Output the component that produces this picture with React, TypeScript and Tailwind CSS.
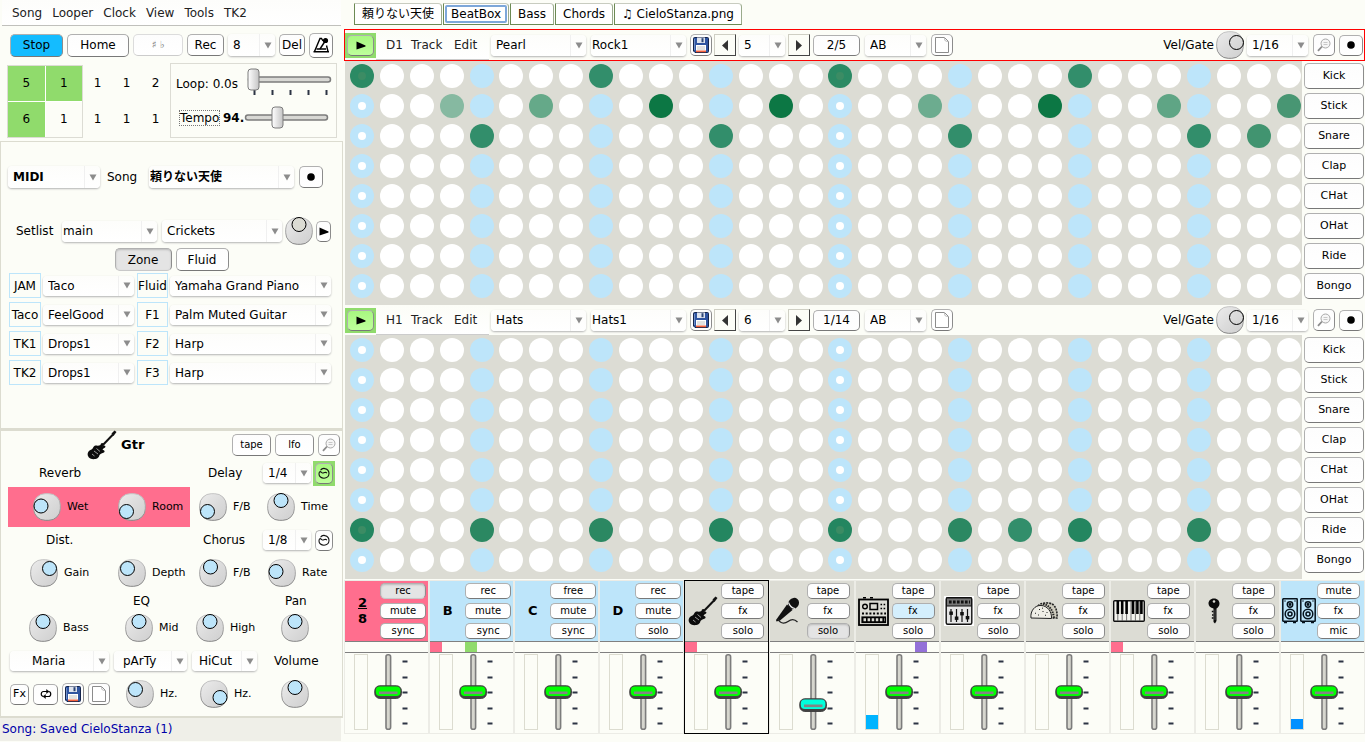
import React, { useState } from 'react';
import { clsx } from 'clsx';

/* ---------- shared controls ---------- */

type BtnProps = React.ButtonHTMLAttributes<HTMLButtonElement> & { tone?: 'white' | 'pressed' | 'blue' | 'lime' | 'sky' };

function Btn({ tone = 'white', className, children, ...rest }: BtnProps) {
  return (
    <button
      type="button"
      {...rest}
      className={clsx(
        'flex shrink-0 items-center justify-center rounded-[5px] border border-[#b0b0b0] border-b-[#787878] border-r-[#8c8c8c] whitespace-nowrap',
        tone === 'white' && 'bg-linear-to-b from-[#fdfdfd] to-white',
        tone === 'pressed' && 'border-[#a8a8a8] border-b-[#c8c8c8] bg-[#e4e4e4] shadow-[inset_0_1px_2px_#bbbbbb]',
        tone === 'blue' && 'bg-[#14bcff]',
        tone === 'lime' && 'bg-linear-to-b from-[#a8f880] to-[#beff9b]',
        tone === 'sky' && 'bg-[#d4effd]',
        className,
      )}
    >
      {children}
    </button>
  );
}

type ComboProps = { label: string; value: string; className?: string; pad?: string; id?: string };

function Combo({ label, value, className, pad = 'pl-[5px]', id }: ComboProps) {
  return (
    <div className={clsx('grid shrink-0 items-center rounded-[4px] bg-linear-to-b from-[#fdfdfb] to-white shadow-[0_1px_2px_#b4b4b4]', className)}>
      <select
        id={id}
        aria-label={label}
        defaultValue={value}
        className={clsx('col-start-1 row-start-1 h-full w-full min-w-0 appearance-none overflow-hidden bg-transparent pr-4', pad)}
      >
        <option>{value}</option>
      </select>
      <span className="pointer-events-none col-start-1 row-start-1 flex h-full w-4 items-center justify-center justify-self-end border-l border-[#f0f0f0]">
        <svg width="8" height="7" viewBox="0 0 8 7" aria-hidden="true">
          <path d="M0.5 0.5h7L4 6.5z" fill="#8c8c8c" />
        </svg>
      </span>
    </div>
  );
}

type KnobProps = { name: string; dx?: number; dy?: number; fill?: string };

function Knob({ name, dx = 0, dy = -6.5, fill = '#bde5fa' }: KnobProps) {
  return (
    <span className="grid h-7 w-7 shrink-0">
      <svg className="col-start-1 row-start-1" width="28" height="28" viewBox="0 0 28 28" aria-hidden="true">
        <defs>
          <linearGradient id="knobBody" x1="0" y1="0" x2="1" y2="1">
            <stop offset="0" stopColor="#ececec" />
            <stop offset="0.5" stopColor="#dcdcdc" />
            <stop offset="1" stopColor="#cfcfcf" />
          </linearGradient>
          <linearGradient id="knobEdge" x1="0" y1="0" x2="0" y2="1">
            <stop offset="0" stopColor="#c4c4c4" />
            <stop offset="1" stopColor="#868686" />
          </linearGradient>
        </defs>
        <rect x="0.7" y="0.7" width="26.6" height="26.6" rx="11.500" fill="url(#knobBody)" stroke="url(#knobEdge)" />
        <circle cx={14 + dx} cy={14 + dy} r="7" fill={fill} stroke="#000" />
      </svg>
      <input type="range" aria-label={name} className="col-start-1 row-start-1 h-7 w-7 opacity-0" />
    </span>
  );
}

function LabelKnob({ text, ...knob }: { text: string } & Omit<KnobProps, 'name'>) {
  return (
    <label className="flex items-center gap-1.5 text-[11px]">
      <Knob name={text} {...knob} />
      {text}
    </label>
  );
}

/* ---------- small icons ---------- */

const Floppy = () => (
  <svg width="16" height="16" viewBox="0 0 16 16" aria-hidden="true">
    <path d="M0.5 1.5q0-1 1-1h13q1 0 1 1v13q0 1-1 1H2l-1.500-1.500z" fill="#2f54a0" stroke="#15244a" />
    <path d="M1.500 2v11" stroke="#6f8fca" />
    <rect x="4" y="0.500" width="8" height="5.500" fill="#dfe4ee" />
    <rect x="8.500" y="1.200" width="2" height="4" fill="#2b4476" />
    <rect x="3" y="8" width="10" height="7" fill="#fff" />
    <path d="M4 10h8M4 12h8" stroke="#c4c4c4" />
    <rect x="3" y="13.500" width="10" height="1.700" fill="#f2603c" />
  </svg>
);

const Doc = () => (
  <svg width="14" height="16" viewBox="0 0 14 16" aria-hidden="true">
    <path d="M0.500 0.500h9l4 4v11h-13z" fill="#fff" stroke="#8c8c8c" />
    <path d="M9.500 0.500q0 3 1 3.500t3 0.500" fill="none" stroke="#b8b8b8" />
  </svg>
);

const Magnifier = () => (
  <svg width="14" height="14" viewBox="0 0 14 14" fill="none" aria-hidden="true">
    <circle cx="8.500" cy="5.500" r="4.500" fill="#f6f6f6" stroke="#a8a8a8" />
    <path d="M6.500 4.500h4M6.500 6.500h4" stroke="#c8c8c8" />
    <path d="M5 8.500L1 12.800" stroke="#8c8c8c" strokeWidth="1.800" />
  </svg>
);

const Dot = () => (
  <svg width="8" height="8" viewBox="0 0 8 8" aria-hidden="true"><circle cx="4" cy="4" r="3.800" /></svg>
);

const PlayTri = () => (
  <svg width="10" height="9" viewBox="0 0 10 9" aria-hidden="true"><path d="M0.500 0.500L9.500 4.500v1L0.500 8.500z" /></svg>
);

const Swirl = () => (
  <svg width="12" height="12" viewBox="0 0 12 12" fill="none" stroke="#111" strokeWidth="1.100" aria-hidden="true">
    <path d="M2.500 3.200C3.500 1.800 5.500 1.200 7 1.600c2.500 .6 4 2.600 4 5 0 2.600-2.200 4.600-5 4.600S1 9.400 1 7c0-1 .3-1.800 .8-2.300" />
    <path d="M1.800 4.700c1.200-.4 1.700 1 2.700 1.300s1.500-.8 3-.8l1.500 .8" />
  </svg>
);

const Repeat = () => (
  <svg width="12" height="10" viewBox="0 0 12 10" fill="none" stroke="#000" strokeWidth="1.200" aria-hidden="true">
    <path d="M3.500 7.500C0.500 7.500 0.500 2.500 3.500 2.500H8M8.500 2.500c3 0 3 5 0 5H4" />
    <path d="M6.500 0.500l2.500 2-2.500 2zM5.500 5.500L3 7.500l2.500 2z" fill="#000" strokeWidth="0.400" />
  </svg>
);

const Metronome = () => (
  <svg width="18" height="18" viewBox="0 0 18 18" fill="none" stroke="#000" strokeWidth="1.400" aria-hidden="true">
    <path d="M11 5L9.500 2.500H8L2.500 15.500M14.500 9.500L16 15.500" />
    <path d="M8 13l5.500-8.500" />
    <circle cx="13.500" cy="4.500" r="1.900" fill="#000" />
    <path d="M4.500 13H14M1.500 15.800h15.500" strokeWidth="1.600" />
  </svg>
);

/* ---------- instrument drawings ---------- */

const Guitar = () => (
  <svg width="30" height="30" viewBox="0 0 30 30" aria-hidden="true">
    <path d="M13 18L26 4.500" stroke="#111" strokeWidth="2" />
    <path d="M24.500 3.500L27.500 0.500l2 1.500-3 4z" fill="#111" />
    <path d="M16.500 13.500c-2-1.500-3 .5-3 1.500-2 1-3.500 .5-5 .5-2.500 .5-2 3-4 4-3 1-4.500 3.500-3.500 6.500 1 3 5 3.500 7.500 3 2.500-.5 3.500-2 4-4 1-2 4-1.500 5-3 .5-1.500-1-2-2-2 .5-2 3-2 3-3.500-1-1.500-2-1-4 .5z" fill="#0c0c0c" />
    <path d="M7 21l4 3M9.500 18.500l3.500 3M5 24l2.500 2" stroke="#aaa" strokeWidth="0.900" />
  </svg>
);

const Mic = () => (
  <svg width="26" height="28" viewBox="0 0 26 28" aria-hidden="true">
    <ellipse cx="18.500" cy="6.500" rx="5.200" ry="6" transform="rotate(40 18.500 6.500)" fill="#111" />
    <path d="M13.500 5.500c1 3 3.500 5.500 6.500 6" stroke="#eee" strokeWidth="1.200" fill="none" />
    <path d="M12 7.500l5.500 5.500L5 23.500l-3.500 1-.5-1.500z" fill="#111" />
    <path d="M3 22c3 6 8 4 10 2.500 4-3 7-2 9.500 .5" stroke="#222" strokeWidth="1.300" fill="none" />
  </svg>
);

const Synth = () => (
  <svg width="31" height="29" viewBox="0 0 31 29" fill="none" stroke="#000" aria-hidden="true">
    <path d="M5 .8h3M12 .8h3" strokeWidth="1.500" />
    <rect x="1" y="2.500" width="29" height="25.500" strokeWidth="1.800" />
    <circle cx="7" cy="9.500" r="2.300" strokeWidth="1.400" />
    <rect x="12" y="6.500" width="7.500" height="6" strokeWidth="1.500" />
    <path d="M22.500 7.500h6M22.500 11.500h6" strokeWidth="1.600" strokeDasharray="1.600 1.500" />
    <path d="M4 16.500h24" strokeWidth="2" strokeDasharray="2 1.700" />
    <rect x="4" y="20" width="23.500" height="5.500" strokeWidth="1.200" fill="#000" />
    <path d="M5.500 22.700h21" stroke="#dcdcd4" strokeWidth="3" strokeDasharray="2.500 1.600" />
  </svg>
);

const MixerDesk = () => (
  <svg width="30" height="30" viewBox="0 0 30 30" fill="none" stroke="#111" aria-hidden="true">
    <rect width="30" height="30" fill="#fff" stroke="none" />
    <rect x="2.200" y="1.800" width="25.600" height="26.500" rx="1.500" fill="#e6e6e6" strokeWidth="1.400" />
    <rect x="2.500" y="2" width="25" height="8" fill="#777" />
    <path d="M5 6h21" strokeWidth="3.200" strokeDasharray="2.600 1.400" />
    <path d="M7 13v13M12.500 13v13M18 13v13M23.500 13v13" strokeWidth="1.200" />
    <g fill="#111" stroke="none">
      <rect x="5.300" y="15.500" width="3.600" height="3.400" /><rect x="10.800" y="20.500" width="3.600" height="3.400" />
      <rect x="16.200" y="16" width="3.600" height="3.400" /><rect x="21.700" y="20" width="3.600" height="3.400" />
    </g>
  </svg>
);

const Taco = () => (
  <svg width="28" height="18" viewBox="0 0 28 18" stroke="#222" aria-hidden="true">
    <path d="M8 4C11 0 19 .5 22 2c4 2 5.500 8 5 14h-5" fill="#cfcdbf" strokeDasharray="2 1" strokeWidth="1.600" />
    <path d="M13 2c6 1 10 6 11 14" fill="none" strokeWidth="2" strokeDasharray="1.500 1" />
    <path d="M1 16C0 9 5 3 11 3.500c6 0 11 6 10.500 13z" fill="#efeee6" />
    <path d="M5 11l1 .5M9 7l1 1M13 9v1M8 13h1M15 13l1 .5M12 6l1 .3M17 10v1" />
  </svg>
);

const Piano = () => (
  <svg width="32" height="22" viewBox="0 0 32 22" aria-hidden="true">
    <rect x="0.700" y="0.700" width="30.600" height="20.600" rx="1" fill="#f4f4ee" stroke="#111" strokeWidth="1.400" />
    <path d="M4.800 1v20M9.200 1v20M13.600 1v20M18 1v20M22.400 1v20M26.800 1v20" stroke="#555" strokeWidth="0.800" />
    <path d="M4.800 1v13M9.200 1v13M13.600 1v13M20 1v13M24.400 1v13M28.400 1v13" stroke="#000" strokeWidth="2.600" />
  </svg>
);

const KeyIcon = () => (
  <svg width="12" height="26" viewBox="0 0 12 26" aria-hidden="true">
    <path d="M6 .5C9.500 .5 11.500 3 11.500 5.500S10 9.500 8.500 10.500V23L7 25.500 5.500 24V10.500C2.500 10 .5 8 .5 5.500S2.500 .5 6 .5z" fill="#0a0a0a" />
    <path d="M5.500 13.500H3.800M5.500 17H4M5.500 20H3.800" stroke="#0a0a0a" strokeWidth="1.500" />
    <circle cx="6" cy="3.500" r="1.300" fill="#dcdcd4" />
    <path d="M7 11.500V22" stroke="#999" strokeWidth="0.500" />
  </svg>
);

const Speakers = () => (
  <svg width="34" height="26" viewBox="0 0 34 26" fill="none" stroke="#06121c" strokeWidth="1.500" aria-hidden="true">
    {[0, 18].map((x) => (
      <g key={x} transform={`translate(${x} 0)`}>
        <rect x="0.800" y="0.800" width="14.400" height="22.400" rx="0.500" />
        <circle cx="8" cy="6.500" r="2.700" />
        <circle cx="8" cy="6.500" r="0.700" />
        <circle cx="8" cy="16" r="4.800" />
        <circle cx="8" cy="16" r="2" />
        <path d="M2.500 3h1M12.500 3h1M2 24.500h3M11 24.500h3" />
      </g>
    ))}
  </svg>
);

/* ---------- left column ---------- */

function HSlider({ name, at, ticks }: { name: string; at: number; ticks?: boolean }) {
  const h = ticks ? 32 : 24;
  return (
    <span className="grid w-[86px]">
      <svg className="col-start-1 row-start-1" width="86" height={h} viewBox={`0 0 86 ${h}`} aria-hidden="true">
        <defs>
          <linearGradient id="thumbH" x1="0" y1="0" x2="1" y2="0">
            <stop offset="0" stopColor="#fff" />
            <stop offset="1" stopColor="#c4c4c4" />
          </linearGradient>
        </defs>
        <rect x="1.500" y="9" width="82" height="5" rx="2.500" fill="#d8d8d4" stroke="#7c7c7c" strokeWidth="1.500" />
        {ticks && <path d="M7.500 22v5M25.500 22v5M43.500 22v5M61.500 22v5M79.500 22v5" stroke="#2c3444" strokeWidth="2" />}
        <rect x={at - 5} y="1" width="11" height="21" rx="3" fill="url(#thumbH)" stroke="#7c7c7c" />
      </svg>
      <input type="range" aria-label={name} className="col-start-1 row-start-1 w-full opacity-0" />
    </span>
  );
}

function Transport() {
  return (
    <div className="px-2 pt-1.5">
      <div className="flex h-[26px] items-center gap-1 pl-0.5">
        <Btn tone="blue" className="h-[23px] w-[53px]">Stop</Btn>
        <Btn className="h-[23px] w-[62px]">Home</Btn>
        <Btn className="h-[22px] w-[50px] border-[#dcdcdc] border-r-[#dcdcdc] border-b-[#cccccc] text-[10px] text-[#777]" disabled>♯ ♭</Btn>
        <Btn className="h-[22px] w-[37px]">Rec</Btn>
        <Combo label="Loop length" value="8" className="h-[22px] w-[47px]" />
        <Btn className="h-[22px] w-[26px]">Del</Btn>
        <Btn className="h-[25px] w-6" aria-label="Metronome"><Metronome /></Btn>
      </div>
      <div className="flex items-start pt-[5px]">
        <div className="mt-0.5 -ml-px grid w-[76px] shrink-0 grid-cols-2 gap-px border border-[#dcdcd4] bg-white text-center leading-[35px]">
          <span className="bg-[#90db6c]">5</span>
          <span className="bg-[#90db6c]">1</span>
          <span className="bg-[#90db6c]">6</span>
          <span className="bg-[#fcfdf7]">1</span>
        </div>
        <div className="mt-0.5 grid w-[87px] shrink-0 grid-cols-3 text-center leading-9">
          {['1', '1', '2', '1', '1', '1'].map((n, i) => <span key={i}>{n}</span>)}
        </div>
        <div className="w-[167px] shrink-0 border border-[#dcdcd4] pl-[5px]">
          <div className="flex h-10 items-center">
            <span className="w-[71px]">Loop: 0.0s</span>
            <HSlider name="Loop" at={6} ticks />
          </div>
          <div className="flex h-[33px] items-start">
            <span className="ml-[3px] mt-1.5 w-[41px] border border-dotted border-[#777] leading-[14px]">Tempo</span>
            <b className="mt-1.5 w-[24px] pl-[3px]">94.</b>
            <div className="mt-0.5"><HSlider name="Tempo" at={33} /></div>
          </div>
        </div>
      </div>
    </div>
  );
}

const zones: [string, string, string, string][] = [
  ['JAM', 'Taco', 'Fluid', 'Yamaha Grand Piano'],
  ['Taco', 'FeelGood', 'F1', 'Palm Muted Guitar'],
  ['TK1', 'Drops1', 'F2', 'Harp'],
  ['TK2', 'Drops1', 'F3', 'Harp'],
];

function SongPanel() {
  return (
    <section className="h-[288px] border border-[#dcdcd0] px-[7px] pt-[23px]">
      <div className="flex h-6 items-center">
        <Combo label="Device" value="MIDI" className="h-[22px] w-[92px] font-bold" />
        <label htmlFor="song" className="w-[49px] pl-[7px]">Song</label>
        <Combo id="song" label="Song" value="頼りない天使" className="h-[22px] w-[145px] font-bold" pad="pl-px" />
        <Btn className="ml-[5px] h-[22px] w-6" aria-label="Record song"><Dot /></Btn>
      </div>
      <div className="mt-7 flex h-7 items-center pl-2">
        <label htmlFor="setlist" className="w-[46px]">Setlist</label>
        <Combo id="setlist" label="Setlist" value="main" className="h-[21px] w-[95px]" pad="pl-px" />
        <Combo label="Backing sound" value="Crickets" className="ml-[5px] h-[22px] w-[120px]" />
        <span className="ml-[3px]"><Knob name="Backing level" fill="#dcdcd4" /></span>
        <Btn className="ml-[3px] h-[21px] w-[15px]" aria-label="Play setlist"><PlayTri /></Btn>
      </div>
      <div className="mt-[3px] flex justify-center gap-1">
        <Btn tone="pressed" className="h-[23px] w-[57px]">Zone</Btn>
        <Btn className="h-[23px] w-[53px]">Fluid</Btn>
      </div>
      <div className="mt-0.5 flex flex-col gap-1 pl-px">
        {zones.map(([a, av, b, bv]) => (
          <div key={a} className="flex h-[25px] items-center">
            <span className="flex h-full w-8 items-center justify-center border border-[#bde5fa]">{a}</span>
            <Combo label={a} value={av} className="ml-0.5 h-5 w-[91px]" />
            <span className="ml-[3px] flex h-full w-[31px] items-center justify-center border border-[#bde5fa]">{b}</span>
            <Combo label={b} value={bv} className="ml-0.5 h-5 w-[161px]" />
          </div>
        ))}
      </div>
    </section>
  );
}

function FxPanel() {
  return (
    <section className="h-[289px] border border-t-2 border-b-2 border-[#dcdcd0]">
      <div className="flex h-7 items-center pr-0.5">
        <span className="ml-[86px]"><Guitar /></span>
        <h2 className="ml-1 flex-1 text-[13px] font-bold">Gtr</h2>
        <div className="flex gap-1 text-[10px]">
          <Btn className="h-[22px] w-[39px]">tape</Btn>
          <Btn className="h-[22px] w-[39px]">lfo</Btn>
          <Btn className="h-[22px] w-[22px]" aria-label="Inspect"><Magnifier /></Btn>
        </div>
      </div>
      <div className="flex h-7 items-center">
        <span className="w-[169px] pl-[38px]">Reverb</span>
        <label htmlFor="delay" className="w-[93px] pl-[38px]">Delay</label>
        <Combo id="delay" label="Delay" value="1/4" className="h-5 w-12" />
        <span className="ml-0.5 flex h-[25px] w-[22px] items-center justify-center bg-[#90db6c]">
          <Btn tone="lime" className="h-[21px] w-[18px]" aria-label="Sync delay"><Swirl /></Btn>
        </span>
      </div>
      <div className="flex h-10 items-center">
        <div className="ml-[7px] flex h-full w-[182px] items-center bg-[#ff6e8e]">
          <div className="w-[86px] pl-[25px]"><LabelKnob text="Wet" dx={-6} dy={-1} /></div>
          <div className="pl-6"><LabelKnob text="Room" dx={-5.500} dy={4.500} /></div>
        </div>
        <div className="w-[77px] pl-[9px]"><LabelKnob text="F/B" dx={-5.500} dy={4.500} /></div>
        <LabelKnob text="Time" />
      </div>
      <div className="flex h-[26px] items-center">
        <span className="w-[164px] pl-[45px]">Dist.</span>
        <label htmlFor="chorus" className="w-[98px] pl-[38px]">Chorus</label>
        <Combo id="chorus" label="Chorus" value="1/8" className="h-5 w-12" />
        <Btn className="ml-1 h-[21px] w-[18px]" aria-label="Sync chorus"><Swirl /></Btn>
      </div>
      <div className="grid h-10 grid-cols-[88px_81px_69px_1fr] items-center pl-[29px]">
        <LabelKnob text="Gain" dx={5.500} dy={-4.500} />
        <LabelKnob text="Depth" dx={-4.500} dy={-4.500} />
        <LabelKnob text="F/B" dx={-2.500} dy={-6} />
        <LabelKnob text="Rate" dx={-6} dy={-1.500} />
      </div>
      <div className="flex h-4 items-center">
        <span className="w-[152px] pl-[132px]">EQ</span>
        <span className="pl-[132px]">Pan</span>
      </div>
      <div className="grid h-[38px] grid-cols-[96px_71px_85px_1fr] items-center pl-7">
        <LabelKnob text="Bass" />
        <LabelKnob text="Mid" />
        <LabelKnob text="High" />
        <Knob name="Pan" />
      </div>
      <div className="flex h-7 items-center gap-[5px] pl-[9px]">
        <Combo label="Preset" value="Maria" className="h-5 w-[99px]" pad="pl-[22px]" />
        <Combo label="Filter mode" value="pArTy" className="h-5 w-[73px]" pad="pl-[9px]" />
        <Combo label="Filter type" value="HiCut" className="h-5 w-[65px]" pad="pl-[7px]" />
        <span className="pl-3">Volume</span>
      </div>
      <div className="flex h-[38px] items-center pl-[9px]">
        <Btn className="h-[21px] w-[19px] text-[11px]">Fx</Btn>
        <Btn className="ml-1 h-[21px] w-[25px]" aria-label="Repeat"><Repeat /></Btn>
        <Btn className="ml-1 h-[22px] w-[22px]" aria-label="Save preset"><Floppy /></Btn>
        <Btn className="ml-1 h-[22px] w-[22px]" aria-label="New preset"><Doc /></Btn>
        <div className="ml-4 w-[74px]"><LabelKnob text="Hz." dx={-4.500} dy={-4.500} /></div>
        <div className="w-[81px]"><LabelKnob text="Hz." dx={6} dy={3.500} /></div>
        <Knob name="Volume" />
      </div>
    </section>
  );
}

/* ---------- beat boxes ---------- */

const drums = ['Kick', 'Stick', 'Snare', 'Clap', 'CHat', 'OHat', 'Ride', 'Bongo'];
type Hits = Record<string, Record<number, string>>;

const rockHits: Hits = {
  Kick: { 0: '#2b8a64', 8: '#328e6b', 16: '#2b8a64', 24: '#328e6b' },
  Stick: { 3: '#86b9a1', 6: '#65a989', 10: '#0c7744', 14: '#0c7744', 19: '#6cac8f', 23: '#0c7744', 27: '#5fa585', 31: '#489673' },
  Snare: { 4: '#328e6b', 12: '#328e6b', 20: '#328e6b', 28: '#328e6b', 30: '#419470' },
};
const hatHits: Hits = {
  Ride: { 0: '#248660', 4: '#2b8862', 8: '#2b8862', 12: '#248660', 16: '#248660', 20: '#2b8862', 22: '#328e6b', 24: '#248660', 28: '#2b8862' },
};

function Steps({ hits }: { hits: Hits }) {
  return (
    <div className="flex">
      <div className="ml-px min-w-0 flex-1 bg-[#dcdcd4] pb-1 pl-0.5">
        {drums.map((drum) => (
          <div key={drum} className="-mr-0.5 grid h-[30px] grid-cols-[repeat(32,minmax(0,1fr))] items-center justify-items-center">
            {Array.from({ length: 32 }, (_, i) => {
              const hit = hits[drum]?.[i];
              return (
                <button
                  key={i}
                  type="button"
                  aria-label={`${drum} step ${i + 1}`}
                  style={hit ? { backgroundColor: hit } : undefined}
                  className={clsx('flex size-6 items-center justify-center rounded-full', i % 4 === 0 ? 'bg-[#bde5fa]' : 'bg-white')}
                >
                  {i % 16 === 0 && <span className={clsx('size-2 rounded-full', hit ? 'bg-[#3c8c64]' : 'bg-white')} />}
                </button>
              );
            })}
          </div>
        ))}
      </div>
      <div className="w-[63px] pr-px pl-0.5 text-[11px]">
        {drums.map((drum) => (
          <div key={drum} className="flex h-[30px] items-center">
            <Btn className="h-[26px] w-full">{drum}</Btn>
          </div>
        ))}
      </div>
    </div>
  );
}

type BarProps = { code: string; kit: string; pattern: string; page: string; count: string; active?: boolean };

function TrackBar({ code, kit, pattern, page, count, active }: BarProps) {
  return (
    <div className={clsx('flex items-center border-x', active ? 'h-8 border-y border-[#ff0000]' : 'h-[30px] border-transparent')}>
      <span className="flex h-[25px] w-[31px] items-center justify-center bg-[#90db6c]">
        <Btn tone="lime" className="h-[21px] w-[27px]" aria-label={`Play ${code}`}><PlayTri /></Btn>
      </span>
      <nav className="flex h-full w-[113px] items-center border-b border-[#cccccc] bg-linear-to-b from-[#fcfdf7] to-white pl-2.5 text-[#222]">
        <button type="button" className="w-[25px] text-left">{code}</button>
        <button type="button" className="w-[43px] text-left">Track</button>
        <button type="button">Edit</button>
      </nav>
      <Combo label="Kit" value={kit} className="ml-0.5 h-[21px] w-[95px]" />
      <Combo label="Pattern" value={pattern} className="ml-[5px] h-[21px] w-[95px]" pad="pl-px" />
      <Btn className="ml-1 h-[22px] w-[22px]" aria-label="Save pattern"><Floppy /></Btn>
      <button type="button" aria-label="Previous page" className="ml-0.5 flex h-[22px] w-[22px] items-center justify-center border border-[#cfcfc4] border-r-[#444] border-b-[#444]">
        <svg width="6" height="11" viewBox="0 0 6 11" aria-hidden="true"><path d="M6 0v11L0 5.500z" fill="#333" /></svg>
      </button>
      <Combo label="Page" value={page} className="ml-[3px] h-[21px] w-[46px]" />
      <button type="button" aria-label="Next page" className="ml-[3px] flex h-[22px] w-[22px] items-center justify-center border border-[#cfcfc4] border-r-[#444] border-b-[#444]">
        <svg width="6" height="11" viewBox="0 0 6 11" aria-hidden="true"><path d="M0 0v11l6-5.500z" fill="#333" /></svg>
      </button>
      <Btn className="ml-[3px] h-[21px] w-[47px]">{count}</Btn>
      <Combo label="Cycle" value="AB" className="ml-[5px] h-[21px] w-[61px]" />
      <Btn className="ml-[5px] h-[22px] w-[22px]" aria-label="New pattern"><Doc /></Btn>
      <div className="ml-auto flex items-center pr-px">
        <span className="mr-0.5">Vel/Gate</span>
        <Knob name="Velocity and gate" dx={6.500} dy={-2.500} fill="transparent" />
        <Combo label="Resolution" value="1/16" className="ml-[3px] h-[21px] w-[61px]" />
        <Btn className="ml-[5px] h-[22px] w-[22px]" aria-label="Inspect track"><Magnifier /></Btn>
        <Btn className="ml-1 h-[21px] w-6" aria-label="Record track"><Dot /></Btn>
      </div>
    </div>
  );
}

const tabs = ['頼りない天使', 'BeatBox', 'Bass', 'Chords', '♫ CieloStanza.png'];

function Tabs() {
  const [current, setCurrent] = useState('BeatBox');
  return (
    <div role="tablist" className="flex h-[29px] items-start gap-px pt-[3px] pl-2.5">
      {tabs.map((t) => (
        <button
          key={t}
          type="button"
          role="tab"
          aria-selected={t === current}
          onClick={() => setCurrent(t)}
          className="h-[22px] rounded-tr-[4px] border border-[#c8ccc0] border-r-[#9aab8c] border-b-[#6c8a54] border-l-[#6c8a54] bg-white p-px"
        >
          <span className={clsx('flex h-full items-center whitespace-nowrap px-1', t === current ? 'rounded-[2px] border-2 border-[#7da7d9]' : 'border-x-2 border-transparent')}>{t}</span>
        </button>
      ))}
    </div>
  );
}

/* ---------- mixer ---------- */

type Channel = {
  name: string;
  head: string;
  art: React.ReactNode;
  keys: string[];
  tones?: Record<number, 'pressed' | 'sky'>;
  marks?: string[];
  level?: string;
  low?: boolean;
  selected?: boolean;
  wide?: boolean;
};

const source = 'bg-[#dcdcd4]';
const sky = 'bg-[#bde5fa]';
const tfs = ['tape', 'fx', 'solo'];

const channels: Channel[] = [
  { name: 'A', head: 'bg-[#ff6e8e]', wide: true, keys: ['rec', 'mute', 'sync'], tones: { 0: 'pressed' }, art: <span className="flex flex-col items-center leading-4"><span className="underline">2</span><span>8</span></span> },
  { name: 'B', head: sky, wide: true, keys: ['rec', 'mute', 'sync'], art: 'B', marks: ['bg-[#ff6e8e]', 'ml-[23px] bg-[#90db6c]'] },
  { name: 'C', head: sky, wide: true, keys: ['free', 'mute', 'sync'], art: 'C' },
  { name: 'D', head: sky, wide: true, keys: ['rec', 'mute', 'solo'], art: 'D' },
  { name: 'Guitar', head: source, keys: tfs, art: <Guitar />, marks: ['bg-[#ff6e8e]'], selected: true },
  { name: 'Mic', head: source, keys: tfs, tones: { 2: 'pressed' }, art: <Mic />, low: true },
  { name: 'Synth', head: source, keys: tfs, tones: { 1: 'sky' }, art: <Synth />, marks: ['ml-[59px] bg-[#9370d8]'], level: 'h-[14px] bg-[#00b4ff]' },
  { name: 'Drums', head: source, keys: tfs, art: <MixerDesk /> },
  { name: 'Taco', head: source, keys: tfs, art: <Taco /> },
  { name: 'Piano', head: source, keys: tfs, art: <Piano />, marks: ['bg-[#ff6e8e]'] },
  { name: 'Key', head: source, keys: tfs, art: <KeyIcon /> },
  { name: 'Main', head: sky, keys: ['mute', 'fx', 'mic'], art: <Speakers />, level: 'h-[10px] bg-[#0090ff]' },
];

function Fader({ name, low }: { name: string; low?: boolean }) {
  const y = low ? 51 : 38;
  return (
    <span className="grid h-[76px] w-9 grid-cols-[36px] grid-rows-[76px]">
      <svg className="col-start-1 row-start-1" width="36" height="76" viewBox="0 0 36 76" aria-hidden="true">
        <rect x="12" y="0.800" width="4.600" height="74.400" rx="2" fill="#d6d6ce" stroke="#7c7c7c" strokeWidth="1.600" />
        <path d="M28.500 7.500h5M28.500 23.500h5M28.500 38.500h5M28.500 54.500h5M28.500 69.500h5" stroke="#2c3444" strokeWidth="2" />
        <rect x="0.800" y={y - 6.200} width="26.600" height="12.600" rx="5" fill="#444" stroke="#3c3c3c" />
        <rect x="1.800" y={y - 5.400} width="24.600" height="9.400" rx="4" fill={low ? '#00ffdc' : '#00ff00'} />
        <rect x="5" y={y - 0.500} width="18.500" height="2.600" fill="#848484" />
      </svg>
      <input type="range" aria-label={`${name} volume`} className="col-start-1 row-start-1 h-[76px] w-9 opacity-0 [writing-mode:vertical-lr]" />
    </span>
  );
}

function Strip({ ch }: { ch: Channel }) {
  return (
    <article className={clsx('border', ch.selected ? 'border-black' : 'border-t-[#ecece6] border-r-[#ecece6] border-b-[#ecece6] border-l-[#ecece6]')}>
      <div className={clsx('flex h-[61px] items-center border-b border-[#808080]', ch.head)}>
        <div className={clsx('flex min-w-0 flex-1 items-center justify-center text-[13px]', ch.wide && 'font-bold')}>{ch.art}</div>
        <div className={clsx('flex shrink-0 flex-col gap-1 text-[10px]', ch.wide ? 'w-12 pr-0.5' : 'w-[47px] pr-1')}>
          {ch.keys.map((k, i) => (
            <Btn key={k} tone={ch.tones?.[i] ?? 'white'} className="h-4 w-full leading-none">{k}</Btn>
          ))}
        </div>
      </div>
      <div className="flex h-[11px] border-b border-[#808080]">
        {ch.marks?.map((m) => <span key={m} className={clsx('w-3', m)} />)}
      </div>
      <div className="flex gap-1.5 pt-px pb-[3px] pl-[9px]">
        <div className="flex h-[76px] w-[14px] flex-col justify-end border border-[#dcdcd0]">
          {ch.level && <span className={ch.level} />}
        </div>
        <Fader name={ch.name} low={ch.low} />
      </div>
    </article>
  );
}

export default function App() {
  return (
    <div className="flex min-h-screen bg-[#fcfdf7] text-xs text-black [font-family:'DejaVu_Sans','Noto_Sans_CJK_JP',sans-serif]">
      <aside className="flex w-[343px] shrink-0 flex-col">
        <nav className="mx-0.5 flex h-[26px] items-center gap-2.5 border-b border-[#c0c0bc] bg-linear-to-b from-[#fdfdfb] to-white pl-2.5 text-[#222]">
          {['Song', 'Looper', 'Clock', 'View', 'Tools', 'TK2'].map((m) => <button key={m} type="button">{m}</button>)}
        </nav>
        <Transport />
        <div className="mt-[3px]"><SongPanel /></div>
        <FxPanel />
        <footer className="mr-0.5 h-[23px] bg-[#efefe8] pl-0.5 leading-[23px] text-[#0000a8]">Song: Saved CieloStanza (1)</footer>
      </aside>
      <main className="ml-px min-w-0 flex-1">
        <Tabs />
        <TrackBar code="D1" kit="Pearl" pattern="Rock1" page="5" count="2/5" active />
        <Steps hits={rockHits} />
        <TrackBar code="H1" kit="Hats" pattern="Hats1" page="6" count="1/14" />
        <Steps hits={hatHits} />
        <div className="mt-px grid grid-cols-12">
          {channels.map((ch) => <Strip key={ch.name} ch={ch} />)}
        </div>
      </main>
    </div>
  );
}
